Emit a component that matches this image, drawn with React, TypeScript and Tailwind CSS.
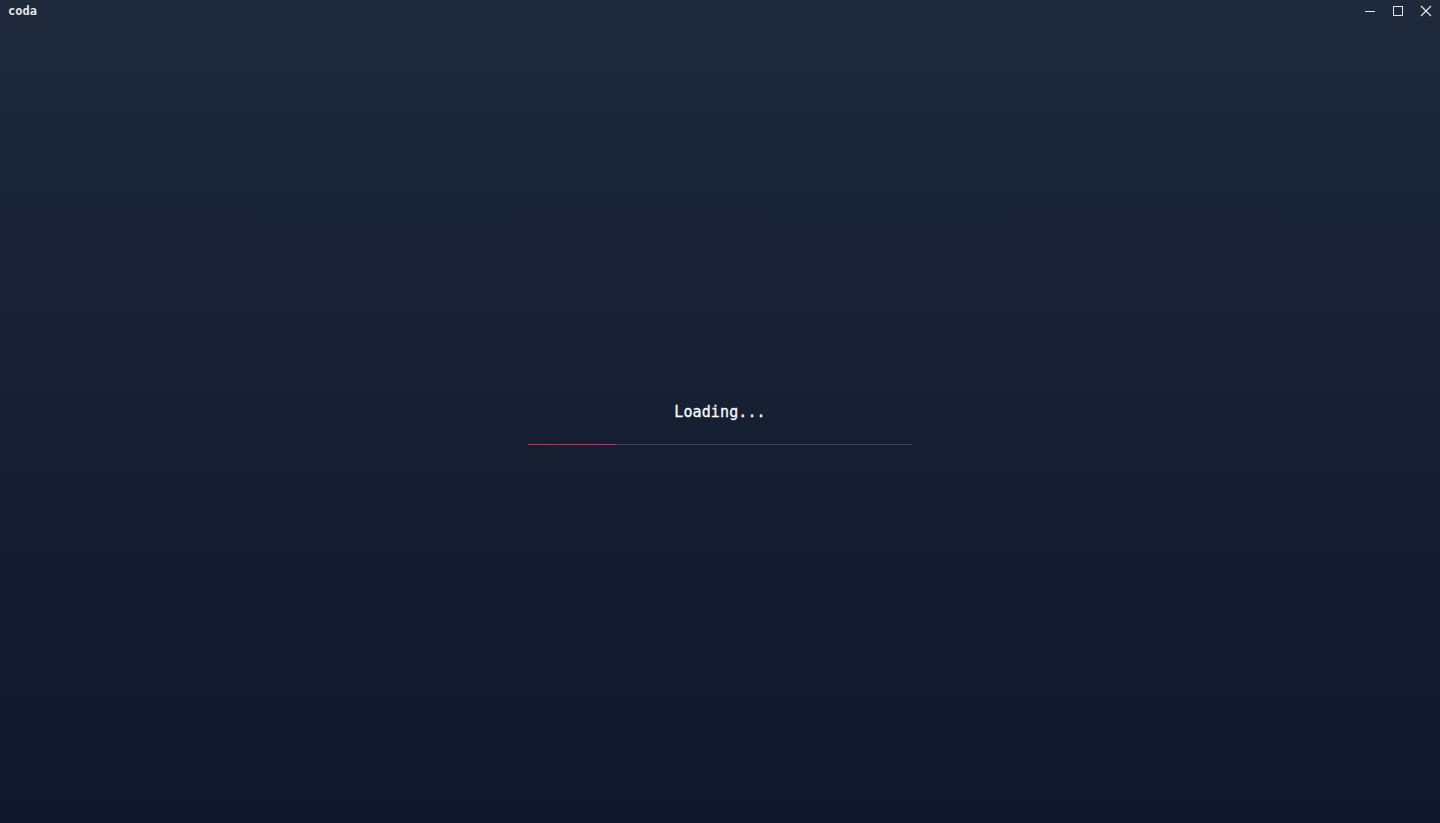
import React from 'react';

const mono = { fontFamily: '"DejaVu Sans Mono", "Liberation Mono", monospace' };

export default function App() {
  return (
    <div
      className="w-[1440px] h-[823px] flex flex-col bg-gradient-to-b from-[#1e293b] to-[#0f172a] text-white overflow-hidden"
      style={mono}
    >
      {/* Title bar */}
      <div className="h-[22px] flex items-center justify-between">
        <span className="pl-2 text-[12px] font-bold text-[#e5e7eb]">coda</span>
        <div className="flex items-center h-full">
          <button className="w-[28px] h-full flex items-center justify-center">
            <svg width="12" height="12" viewBox="0 0 12 12">
              <line x1="1" y1="6.5" x2="11" y2="6.5" stroke="#e5e7eb" strokeWidth="1" />
            </svg>
          </button>
          <button className="w-[28px] h-full flex items-center justify-center">
            <svg width="12" height="12" viewBox="0 0 12 12">
              <rect x="1.5" y="1.5" width="9" height="9" fill="none" stroke="#e5e7eb" strokeWidth="1" />
            </svg>
          </button>
          <button className="w-[28px] h-full flex items-center justify-center">
            <svg width="12" height="12" viewBox="0 0 12 12">
              <path d="M1 1 L11 11 M11 1 L1 11" stroke="#e5e7eb" strokeWidth="1.2" />
            </svg>
          </button>
        </div>
      </div>

      {/* Loader */}
      <div className="flex-1 flex flex-col items-center pt-[379px]">
        <span className="text-[15px] font-normal text-[#f8fafc] tracking-[0.1px] [-webkit-text-stroke:0.3px_#f8fafc]">
          Loading...
        </span>
        <div className="mt-[20px] w-96 h-px bg-[#3b4556] flex">
          <div className="w-[88px] h-px bg-gradient-to-r from-[#e11d48] to-[#db2777]" />
        </div>
      </div>
    </div>
  );
}
